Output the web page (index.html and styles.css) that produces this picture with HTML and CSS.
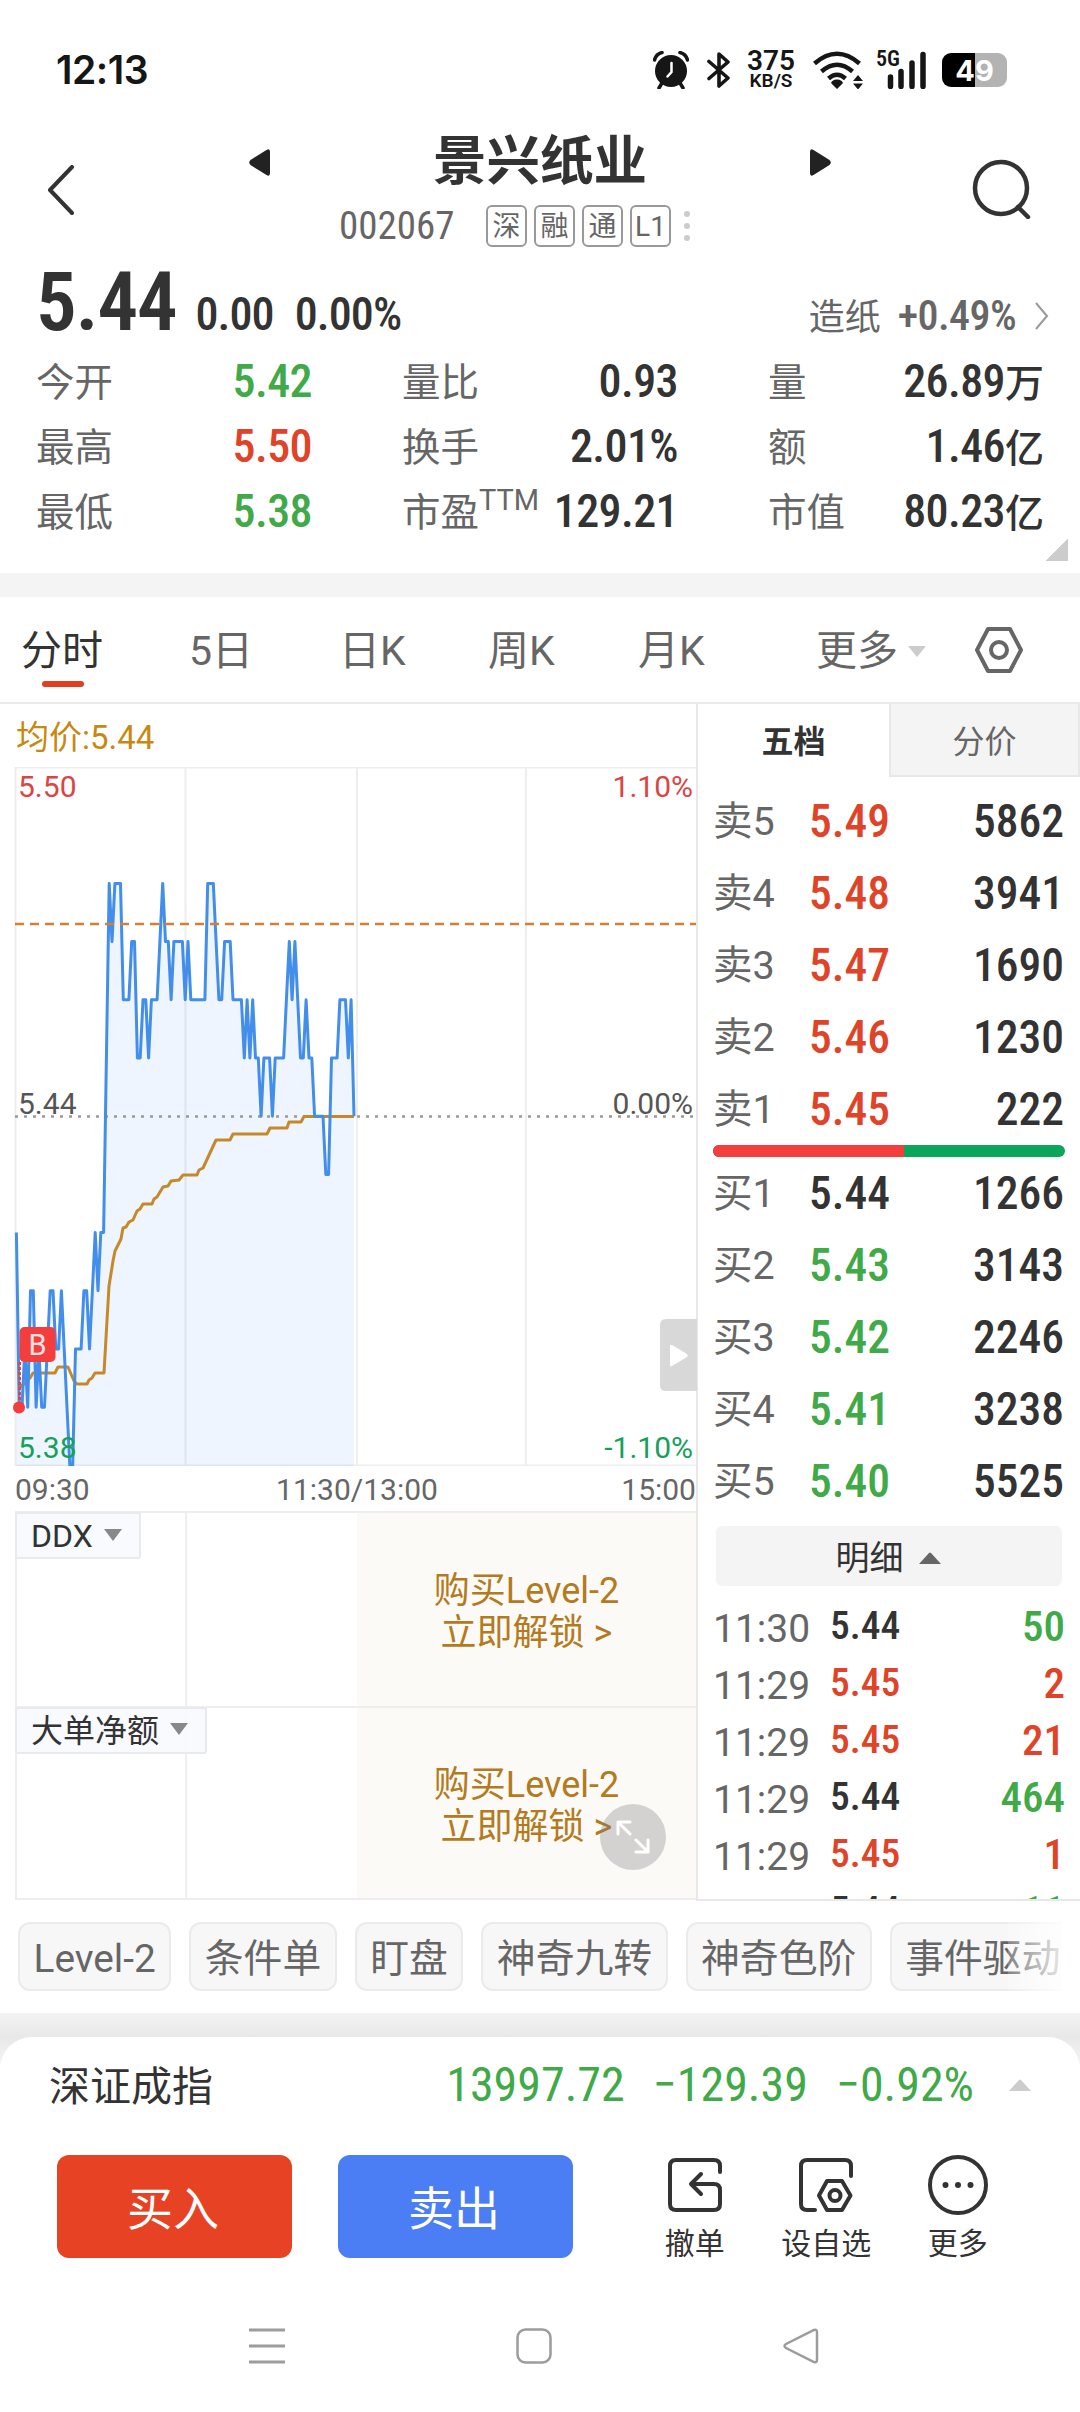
FILE: index.html
```
<!DOCTYPE html>
<html lang="zh-CN">
<head>
    <meta charset="UTF-8">
    <meta name="viewport" content="width=device-width, initial-scale=1.0">
    <title>景兴纸业 002067</title>
    <link rel="stylesheet" href="styles.css">
</head>
<body>
    <div class="status-bar">
        <span class="clock">12:13</span>
        <div class="status-icons">
            <svg class="i-alarm" width="36" height="38" viewBox="0 0 36 38">
                <circle cx="18" cy="20" r="16" fill="#161616"/>
                <path d="M1.500 9Q3 3 9 1.500M34.500 9Q33 3 27 1.500M9 32l-3 5M27 32l3 5" stroke="#161616" stroke-width="3.500" stroke-linecap="round" fill="none"/>
                <path d="M18.500 12v9l-4 4.500" stroke="#fff" stroke-width="2.500" stroke-linecap="round" fill="none"/>
            </svg>
            <svg class="i-bt" width="24" height="38" viewBox="0 0 24 38">
                <path d="M2 10.500L21 27 12 35V3l9 8L2 27.500" stroke="#161616" stroke-width="3.600" stroke-linejoin="round" stroke-linecap="round" fill="none"/>
            </svg>
            <div class="speed"><b>375</b><span>KB/S</span></div>
            <svg class="i-wifi" width="52" height="38" viewBox="0 0 52 38">
                <path d="M2.500 12.500Q25 -7 47.500 12.500M9.500 20.500Q25 7 40.500 20.500M16.500 27.500Q25 20 33.500 27.500" stroke="#161616" stroke-width="4.500" fill="none"/>
                <path d="M25 28.500a6 5 0 0 1 6 3.500l-6 6-6-6a6 5 0 0 1 6-3.500zM41 30l5-6 5 6zM41 32.500l5 6 5-6z" fill="#161616"/>
            </svg>
            <div class="signal">
                <span>5G</span>
                <svg width="50" height="38" viewBox="0 0 50 38">
                    <path d="M13.500 26v9.500M24 20.500v15M35 12v23.500M46 3.500v32" stroke="#161616" stroke-width="5.500" stroke-linecap="round"/>
                </svg>
            </div>
            <div class="battery"><span>49</span></div>
        </div>
    </div>

    <header class="header">
        <svg class="back" width="27" height="50" viewBox="0 0 27 50"><path d="M25 2L3 25l22 23" fill="none" stroke="#333" stroke-width="4" stroke-linecap="round" stroke-linejoin="round"/></svg>
        <div class="stock">
            <div class="stock-name">
                <svg width="21" height="27" viewBox="0 0 21 27"><path d="M21 3v21q0 4-3.500 2L1.500 16q-2.500-2.500 0-5L17.500 1Q21-1 21 3z" fill="#222"/></svg>
                <h1>景兴纸业</h1>
                <svg width="21" height="27" viewBox="0 0 21 27"><path d="M0 3v21q0 4 3.500 2l16-10q2.500-2.500 0-5L3.500 1Q0-1 0 3z" fill="#222"/></svg>
            </div>
            <div class="stock-code">
                <span class="num code">002067</span>
                <span class="tag">深</span><span class="tag">融</span><span class="tag">通</span><span class="tag">L1</span>
                <svg width="6" height="32" viewBox="0 0 6 32"><g fill="#ccc"><circle cx="3" cy="4" r="3"/><circle cx="3" cy="16" r="3"/><circle cx="3" cy="28" r="3"/></g></svg>
            </div>
        </div>
        <svg class="search" width="60" height="60" viewBox="0 0 60 60"><g fill="none" stroke="#333" stroke-width="4.500" stroke-linecap="round"><circle cx="29" cy="29" r="26"/><path d="M46 48l10 10"/></g></svg>
    </header>

    <section class="quote">
        <div class="quote-head">
            <span class="num price">5.44</span>
            <span class="num change">0.00</span>
            <span class="num change">0.00%</span>
            <span class="sector">造纸</span>
            <span class="num sector-change">+0.49%</span>
            <svg width="14" height="28" viewBox="0 0 14 28"><path d="M1 1l11 13L1 27" fill="none" stroke="#999" stroke-width="2"/></svg>
        </div>
        <div class="stats">
            <div class="stat"><span>今开</span><b class="num green">5.42</b></div>
            <div class="stat"><span>量比</span><b class="num">0.93</b></div>
            <div class="stat"><span>量</span><b class="num">26.89<i>万</i></b></div>
            <div class="stat"><span>最高</span><b class="num red">5.50</b></div>
            <div class="stat"><span>换手</span><b class="num">2.01%</b></div>
            <div class="stat"><span>额</span><b class="num">1.46<i>亿</i></b></div>
            <div class="stat"><span>最低</span><b class="num green">5.38</b></div>
            <div class="stat"><span>市盈<sup>TTM</sup></span><b class="num">129.21</b></div>
            <div class="stat"><span>市值</span><b class="num">80.23<i>亿</i></b></div>
        </div>
        <div class="corner"></div>
    </section>

    <nav class="tabs">
        <span class="tab active">分时</span>
        <span class="tab">5日</span>
        <span class="tab">日K</span>
        <span class="tab">周K</span>
        <span class="tab">月K</span>
        <span class="tab more">更多<svg width="18" height="11" viewBox="0 0 18 11"><path d="M0 0h18L9 11z" fill="#ccc"/></svg></span>
        <svg class="settings" width="48" height="46" viewBox="0 0 48 46"><g fill="none" stroke="#666" stroke-width="4" stroke-linejoin="round"><path d="M13 2h22l11 21-11 21H13L2 23z"/><circle cx="24" cy="23" r="8"/></g></svg>
    </nav>

    <main class="main">
        <section class="chart">
            <div class="average">均价:5.44</div>
            <svg class="plot" width="697" height="699" viewBox="-15 0 697 699">
                <path class="grid" d="M0.500 0.500H681M0.500 698.500H681M0.500 0V699M170.500 0V699M342 0V699M511 0V699"/>
                <path id="area" class="area"/>
                <path class="zero" d="M0 349.500H681"/>
                <polyline class="avg-line" points="4,621 10,616 15,611 18,606 40,606 43,600 53,600 59,614 62,617 72,617 74,613 77,611 80,606 89,606 91,571 94,519 98,494 100,484 106,472 108,461 111,460 114,455 118,453 122,444 125,442 128,437 137,437 139,432 142,430 148,420 153,419 156,414 164,413 168,408 182,408 184,403 188,401 201,373 215,373 218,367 252,367 255,361 272,361 274,355 286,355 289,349.5 339,349.5"/>
                <path id="line" class="price-line"/>
                <path class="cost" d="M0 157H681"/>
                <path class="buy-stem" d="M4.500 595V640"/>
                <circle cx="4" cy="640.500" r="6" fill="#f43e3e"/>
                <rect x="4.500" y="560" width="36" height="35" rx="5" fill="#f43e3e"/>
                <text x="22.500" y="588" class="buy-mark">B</text>
                <g class="scale">
                    <text x="3" y="30" fill="#dc4444">5.50</text>
                    <text x="678" y="30" fill="#dc4444" text-anchor="end">1.10%</text>
                    <text x="3" y="347">5.44</text>
                    <text x="678" y="347" text-anchor="end">0.00%</text>
                    <text x="3" y="691" fill="#16a05a">5.38</text>
                    <text x="678" y="691" fill="#16a05a" text-anchor="end">-1.10%</text>
                </g>
                <path d="M682 552H651q-6 0-6 6v60q0 6 6 6h31z" fill="#d8d8d8"/>
                <path d="M655 579v19q0 2 2 1l15-9q1.500-1.500 0-3l-15-9q-2-1-2 1z" fill="#fff"/>
            </svg>
            <div class="axis"><span>09:30</span><span>11:30/13:00</span><span>15:00</span></div>
            <div class="panel">
                <div class="panel-left"><span class="indicator">DDX <i></i></span></div>
                <div class="unlock">购买Level-2<br>立即解锁 &gt;</div>
            </div>
            <div class="panel">
                <div class="panel-left"><span class="indicator">大单净额 <i></i></span></div>
                <div class="unlock">购买Level-2<br>立即解锁 &gt;</div>
                <div class="expand">
                    <svg width="34" height="34" viewBox="0 0 34 34"><path d="M14 14L2 2M2 14V2h12M20 20l12 12M20 32h12V20" fill="none" stroke="#fff" stroke-width="3" stroke-linecap="round" stroke-linejoin="round"/></svg>
                </div>
            </div>
        </section>

        <section class="book">
            <div class="book-tabs"><span class="current">五档</span><span>分价</span></div>
            <div class="levels">
                <div class="level"><span>卖5</span><b class="num red">5.49</b><b class="num">5862</b></div>
                <div class="level"><span>卖4</span><b class="num red">5.48</b><b class="num">3941</b></div>
                <div class="level"><span>卖3</span><b class="num red">5.47</b><b class="num">1690</b></div>
                <div class="level"><span>卖2</span><b class="num red">5.46</b><b class="num">1230</b></div>
                <div class="level"><span>卖1</span><b class="num red">5.45</b><b class="num">222</b></div>
            </div>
            <div class="ratio"><div style="width: 54.3%"></div></div>
            <div class="levels-buy">
                <div class="level"><span>买1</span><b class="num">5.44</b><b class="num">1266</b></div>
                <div class="level"><span>买2</span><b class="num green">5.43</b><b class="num">3143</b></div>
                <div class="level"><span>买3</span><b class="num green">5.42</b><b class="num">2246</b></div>
                <div class="level"><span>买4</span><b class="num green">5.41</b><b class="num">3238</b></div>
                <div class="level"><span>买5</span><b class="num green">5.40</b><b class="num">5525</b></div>
            </div>
            <div class="detail-btn">明细<svg width="22" height="12" viewBox="0 0 22 12"><path d="M0 12L10 1q1-1 2 0l10 11z" fill="#666"/></svg></div>
            <div class="trades">
                <div class="trade"><span>11:30</span><b class="num">5.44</b><b class="num green">50</b></div>
                <div class="trade"><span>11:29</span><b class="num red">5.45</b><b class="num red">2</b></div>
                <div class="trade"><span>11:29</span><b class="num red">5.45</b><b class="num red">21</b></div>
                <div class="trade"><span>11:29</span><b class="num">5.44</b><b class="num green">464</b></div>
                <div class="trade"><span>11:29</span><b class="num red">5.45</b><b class="num red">1</b></div>
                <div class="trade"><span>11:29</span><b class="num">5.44</b><b class="num green">11</b></div>
            </div>
        </section>
    </main>

    <div class="chips">
        <span>Level-2</span><span>条件单</span><span>盯盘</span><span>神奇九转</span><span>神奇色阶</span><span>事件驱动</span>
    </div>

    <div class="sheet-wrap">
        <footer class="sheet">
            <div class="index">
                <span class="index-name">深证成指</span>
                <span class="num">13997.72</span>
                <span class="num">−129.39</span>
                <span class="num">−0.92%</span>
                <svg width="22" height="12" viewBox="0 0 22 12"><path d="M0 12L10 1q1-1 2 0l10 11z" fill="#ccc"/></svg>
            </div>
            <div class="actions">
                <button class="btn buy">买入</button>
                <button class="btn sell">卖出</button>
                <div class="action a1">
                    <svg width="60" height="60" viewBox="0 0 60 60"><path d="M55 17V11q0-6-6-6H11q-6 0-6 6v38q0 6 6 6h38q6 0 6-6V35q0-6-6-6H27M36 19L26 29l10 10" fill="none" stroke="#333" stroke-width="4" stroke-linecap="round" stroke-linejoin="round"/></svg>
                    <span>撤单</span>
                </div>
                <div class="action a2">
                    <svg width="60" height="60" viewBox="0 0 60 60"><g fill="none" stroke="#333" stroke-width="4" stroke-linecap="round" stroke-linejoin="round"><path d="M55 21V11q0-6-6-6H11q-6 0-6 6v38q0 6 6 6h8"/><path d="M31 26h15l8.500 14.500L46 55H31l-8-14.500z"/><circle cx="39" cy="40.500" r="5.500"/></g></svg>
                    <span>设自选</span>
                </div>
                <div class="action a3">
                    <svg width="60" height="60" viewBox="0 0 60 60"><circle cx="30" cy="30" r="28" fill="none" stroke="#333" stroke-width="4"/><g fill="#333"><circle cx="17.500" cy="30" r="3"/><circle cx="30" cy="30" r="3"/><circle cx="42.500" cy="30" r="3"/></g></svg>
                    <span>更多</span>
                </div>
            </div>
            <div class="system-nav">
                <svg width="36" height="36" viewBox="0 0 36 36"><path d="M0 2h36M0 18h36M0 34h36" stroke="#9c9c9c" stroke-width="3"/></svg>
                <svg width="36" height="36" viewBox="0 0 36 36"><rect x="1.500" y="1.500" width="33" height="33" rx="8" fill="none" stroke="#9c9c9c" stroke-width="2.500"/></svg>
                <svg width="36" height="36" viewBox="0 0 36 36"><path d="M34 4v28q0 3-3 2L3 20q-3-2 0-4L31 2q3-1 3 2z" fill="none" stroke="#9c9c9c" stroke-width="2.500"/></svg>
            </div>
        </footer>
    </div>
    <script src="chart.js"></script>
</body>
</html>
```
FILE: styles.css
```
* {
    box-sizing: border-box;
}
body {
    margin: 0;
    width: 1080px;
    height: 2412px;
    overflow: hidden;
    background: #fff;
    color: #333;
    font-family: Roboto, "Noto Sans CJK SC", sans-serif;
}
svg {
    display: block;
    flex-shrink: 0;
}
.num {
    font-stretch: 85%;
    font-weight: 500;
}
.red {
    color: #e04428;
}
.green {
    color: #40a948;
}

/* status bar */
.status-bar {
    height: 120px;
    padding: 20px 73px 0 56px;
    display: flex;
    align-items: center;
    justify-content: space-between;
    color: #161616;
}
.clock {
    font-family: Inter, sans-serif;
    font-size: 39px;
    font-weight: 600;
    letter-spacing: -0.5px;
    margin-top: -2px;
}
.status-icons {
    display: flex;
    align-items: center;
}
.i-bt {
    margin-left: 18px;
}
.speed {
    width: 48px;
    margin-left: 16px;
    display: flex;
    flex-direction: column;
    align-items: center;
    line-height: 22px;
    font-size: 28px;
    font-stretch: 92%;
}
.speed b {
    font-weight: 600;
}
.speed span {
    font-size: 19px;
    font-weight: 600;
    line-height: 18px;
}
.i-wifi {
    margin-left: 17px;
}
.signal {
    position: relative;
    margin-left: 13px;
}
.signal span {
    position: absolute;
    left: -1px;
    top: -2px;
    font-size: 22px;
    line-height: 20px;
    font-weight: 600;
    font-stretch: 80%;
}
.battery {
    margin-left: 15px;
    width: 65px;
    height: 34px;
    border-radius: 9px;
    background: linear-gradient(to right, #000 33px, #b3b3b3 33px);
    color: #fff;
    font-family: Inter, sans-serif;
    font-size: 29px;
    font-weight: 700;
    line-height: 35px;
    text-align: center;
}

/* header */
.header {
    height: 140px;
    display: grid;
    grid-template-columns: 249px 582px 249px;
}
.back {
    margin: 45px 0 0 47px;
}
.search {
    margin: 39px 0 0 141px;
}
.stock {
    padding-top: 12px;
}
.stock-name {
    height: 60px;
    display: flex;
    align-items: center;
    justify-content: space-between;
    margin-bottom: 13px;
}
.stock-name h1 {
    margin: 0;
    font-size: 53.5px;
    line-height: 60px;
    font-weight: 700;
}
.stock-code {
    display: flex;
    align-items: center;
    padding-left: 90px;
    color: #666;
}
.code {
    font-size: 39px;
    font-weight: 400;
    line-height: 42px;
    width: 147px;
}
.tag {
    width: 41px;
    height: 42px;
    margin-right: 7px;
    border: 2px solid #999;
    border-radius: 6px;
    font-size: 28px;
    line-height: 39px;
    text-align: center;
}
.stock-code svg {
    margin-left: 6px;
}

/* quote */
.quote {
    height: 337px;
    border-bottom: 24px solid #f4f4f4;
}
.quote .num {
    font-stretch: 80%;
    letter-spacing: -0.6px;
}
.quote-head {
    height: 89px;
    padding: 0 31px 0 36px;
    display: flex;
    align-items: baseline;
}
.quote .price {
    font-size: 81px;
    line-height: 86px;
    font-weight: 600;
    font-stretch: 77%;
    letter-spacing: -1.2px;
    margin-right: 19px;
}
.quote .change {
    font-size: 46px;
    font-stretch: 78%;
    letter-spacing: -0.9px;
    margin-right: 21px;
}
.sector {
    margin-left: auto;
    font-size: 36px;
    color: #666;
}
.quote .sector-change {
    font-size: 42px;
    font-stretch: 80%;
    color: #666;
    margin: 0 19px 0 17px;
}
.stats {
    display: grid;
    grid-template-columns: 275px 275px 275px;
    column-gap: 91px;
    padding-left: 37px;
}
.stat {
    height: 65px;
    display: flex;
    justify-content: space-between;
    line-height: 65px;
    font-size: 38.5px;
    color: #666;
    white-space: nowrap;
}
.stat span {
    padding-top: 1px;
    margin-left: -1px;
}
.stat b {
    font-size: 46px;
    color: #333;
}
.stat b.red {
    color: #e04428;
}
.stat b.green {
    color: #40a948;
}
.stat i {
    font-size: 39px;
    font-style: normal;
    letter-spacing: 0;
}
.stat sup {
    font-size: 29px;
    line-height: 0;
    vertical-align: 16px;
}
.corner {
    width: 22px;
    height: 22px;
    margin: -5px 12px 0 auto;
    background: linear-gradient(135deg, transparent 50%, #ccc 50%);
}

/* period tabs */
.tabs {
    height: 107px;
    border-bottom: 2px solid #ebebeb;
    padding-left: 21px;
    display: flex;
    align-items: center;
    font-size: 41px;
    line-height: 60px;
    color: #666;
}
.tab {
    width: 150px;
    padding-top: 3px;
}
.tab.active {
    width: 168px;
    color: #333;
    position: relative;
}
.tab.active::after {
    content: "";
    position: absolute;
    left: 21px;
    bottom: -6px;
    width: 42px;
    height: 6px;
    border-radius: 3px;
    background: #e04022;
}
.tab:nth-child(3) {
    width: 149px;
}
.tab:nth-child(5) {
    width: 178px;
}
.tab.more {
    width: 159px;
    display: flex;
    align-items: center;
    gap: 10px;
}

/* chart */
.main {
    display: flex;
    height: 1197px;
}
.chart {
    width: 698px;
    border-right: 2px solid #e8e8e8;
}
.average {
    height: 63px;
    padding-left: 16px;
    font-size: 33px;
    line-height: 67px;
    color: #c9880f;
}
.plot .grid {
    stroke: #eee;
    stroke-width: 2;
}
.area {
    fill: rgba(63, 143, 240, 0.09);
}
.price-line, .avg-line {
    fill: none;
    stroke: #428eea;
    stroke-width: 3;
    stroke-linejoin: round;
}
.avg-line {
    stroke: #c5892a;
}
.zero {
    stroke: #999;
    stroke-width: 2.5;
    stroke-dasharray: 3 6;
}
.cost {
    stroke: #d27f38;
    stroke-width: 2.5;
    stroke-dasharray: 9 6;
}
.buy-stem {
    stroke: #f43e3e;
    stroke-width: 3;
    stroke-dasharray: 3 2;
}
.buy-mark {
    font-size: 29px;
    fill: #fde3e3;
    text-anchor: middle;
}
.scale {
    font-size: 30px;
    fill: #555;
}
.axis {
    height: 45px;
    padding-left: 15px;
    display: flex;
    justify-content: space-between;
    font-size: 30px;
    line-height: 47px;
    color: #666;
}
.axis span:nth-child(2) {
    margin-left: 3px;
}
.panel {
    position: relative;
    height: 194.5px;
    margin-left: 15px;
    border: 2px solid #eee;
    border-width: 2px 0 0 2px;
    display: flex;
}
.panel:last-child {
    border-bottom-width: 2px;
}
.panel-left {
    width: 340px;
    background: linear-gradient(#eee, #eee) 168px 0 / 2px 100% no-repeat;
}
.indicator {
    display: inline-flex;
    align-items: center;
    height: 47px;
    margin: -1px 0 0 -2px;
    padding: 1px 17px 0 14px;
    border: 2px solid #e9eaee;
    border-radius: 3px;
    background: rgba(247, 249, 254, 0.9);
    font-size: 32px;
    line-height: 44px;
}
.indicator i {
    margin-left: 11px;
    margin-top: -3px;
    border: 9px solid transparent;
    border-top: 12px solid #888;
    border-bottom: 0;
}
.unlock {
    flex: 1;
    padding-top: 56.5px;
    background: #fbfaf6;
    color: #b47a1e;
    font-size: 36px;
    line-height: 42px;
    text-align: center;
}
.expand {
    position: absolute;
    right: 30px;
    bottom: 28px;
    width: 66px;
    height: 66px;
    border-radius: 50%;
    background: rgba(120, 120, 120, 0.3);
    display: flex;
    align-items: center;
    justify-content: center;
}

/* order book */
.book {
    width: 382px;
    display: flex;
    flex-direction: column;
}
.book-tabs {
    height: 73px;
    margin-bottom: 8px;
    display: flex;
    font-size: 32px;
    line-height: 76px;
    text-align: center;
}
.book-tabs span {
    width: 191px;
    background: #f4f4f4;
    border: 2px solid #e8e8e8;
    border-top-width: 0;
    color: #666;
}
.book-tabs .current {
    background: none;
    border: 0;
    color: #333;
    font-weight: 700;
}
.level {
    height: 72px;
    padding: 0 16px 0 15px;
    display: flex;
    line-height: 73px;
    font-size: 39.5px;
    color: #666;
}
.level span {
    width: 96px;
}
.level b {
    font-size: 45.5px;
    color: #333;
}
.level b.red, .trade b.red {
    color: #e04428;
}
.level b.green, .trade b.green {
    color: #40a948;
}
.level b:last-child, .trade b:last-child {
    margin-left: auto;
}
.ratio {
    height: 12px;
    margin: 0 15px;
    border-radius: 6px;
    overflow: hidden;
    background: #0ba65a;
}
.ratio div {
    height: 12px;
    background: #f43e3e;
}
.detail-btn {
    height: 60px;
    margin: 9px 18px 12px;
    border-radius: 6px;
    background: #f4f4f4;
    display: flex;
    align-items: center;
    justify-content: center;
    gap: 15px;
    padding: 3px 2px 0 0;
    font-size: 34px;
    line-height: 60px;
}
.trades {
    flex: 1;
    overflow: hidden;
    border-bottom: 2px solid #e8e8e8;
}
.trade {
    height: 57px;
    padding: 0 15px 0 15px;
    display: flex;
    line-height: 56px;
    font-size: 39px;
    color: #666;
}
.trade span {
    width: 117px;
    padding-top: 3px;
}
.trade b {
    font-size: 39.5px;
    color: #333;
}
.trade b:last-child {
    font-size: 43px;
}

/* shortcut chips */
.chips {
    position: relative;
    height: 69px;
    margin: 21px 18px 22px;
    display: flex;
    gap: 18px;
    overflow: hidden;
}
.chips span {
    flex-shrink: 0;
    padding: 0 13.5px;
    border: 2px solid #ebebeb;
    border-radius: 12px;
    background: #f7f7f7;
    color: #666;
    font-size: 38.8px;
    line-height: 67px;
    padding-top: 1px;
}
.chips::after {
    content: "";
    position: absolute;
    top: 0;
    right: 0;
    width: 54px;
    height: 100%;
    background: linear-gradient(to right, rgba(255, 255, 255, 0.2), rgba(255, 255, 255, 0.85));
}

/* bottom sheet */
.sheet-wrap {
    padding-top: 24px;
    background: linear-gradient(#f3f3f3, #e8e8e8 24px, #f4f4f4 50px);
}
.sheet {
    height: 376px;
    border-radius: 32px 32px 0 0;
    background: #fff;
}
.index {
    height: 96px;
    padding: 0 49px;
    display: flex;
    align-items: center;
    font-size: 48px;
    line-height: 96px;
    color: #40a948;
}
.index-name {
    margin-right: auto;
    padding-top: 3px;
    font-size: 41px;
    color: #333;
}
.index .num {
    font-weight: 430;
    font-stretch: 82%;
    margin-left: 28px;
}
.index svg {
    margin-left: 35px;
}
.actions {
    height: 103px;
    margin-top: 22px;
    padding-left: 57px;
    display: flex;
}
.btn {
    width: 235px;
    height: 103px;
    margin-right: 46px;
    padding: 0 3px 4px 0;
    border: 0;
    border-radius: 12px;
    color: #fff;
    font-family: inherit;
    font-size: 46px;
}
.buy {
    background: #e84224;
}
.sell {
    background: #4b7df4;
}
.action {
    width: 131.5px;
    display: flex;
    flex-direction: column;
    align-items: center;
    gap: 9px;
    font-size: 30px;
    line-height: 40px;
    white-space: nowrap;
}
.a1 {
    margin-left: 10px;
}
.system-nav {
    padding: 70px 261px 0 249px;
    display: flex;
    justify-content: space-between;
}
```
FILE: chart.js
```
// one price per minute, 09:30 - 11:30, in cents above 5.00
const prices = [
    42, 39, 39, 40, 39, 41, 41, 39, 40, 39, 39, 40, 41, 41, 40, 40, 41, 40, 39, 38,
    38, 40, 40, 40, 41, 41, 40, 41, 42, 41, 42, 42, 45, 48, 47, 48, 48, 48, 46, 46,
    46, 47, 47, 45, 45, 46, 46, 45, 46, 46, 46, 47, 48, 47, 47, 46, 47, 47, 47, 47,
    46, 47, 46, 46, 46, 46, 46, 46, 48, 48, 48, 47, 46, 46, 47, 47, 47, 46, 46, 46,
    46, 45, 46, 45, 46, 45, 45, 44, 45, 45, 45, 44, 45, 45, 45, 45, 46, 47, 46, 47,
    46, 45, 45, 46, 45, 45, 44, 44, 44, 44, 43, 43, 45, 45, 45, 46, 46, 46, 45, 46,
    44
];
const points = prices.map((p, i) => {
    const x = 1.4 + i * 2.813;
    const y = (50 - p) * 58.2;
    return x.toFixed(1) + ',' + y.toFixed(1);
});
document.getElementById('line').setAttribute('d', 'M' + points.join('L'));
document.getElementById('area').setAttribute('d', 'M1.4,699L' + points.join('L') + 'L339,699Z');
```
